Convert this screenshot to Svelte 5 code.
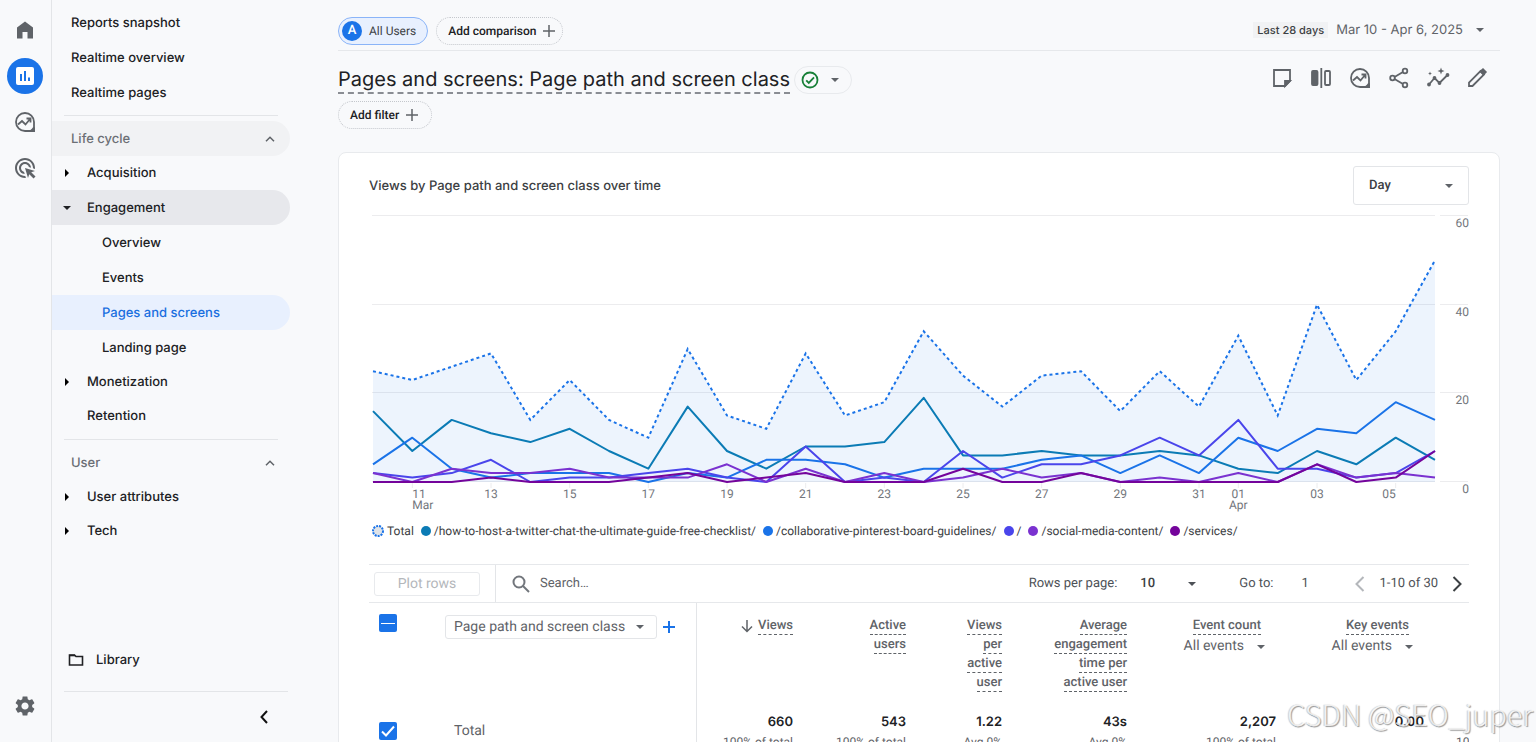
<script>
    const topLinks = ["Reports snapshot", "Realtime overview", "Realtime pages"];

    const lifeCycle = [
        { label: "Acquisition", caret: "right" },
        {
            label: "Engagement",
            caret: "down",
            open: true,
            children: ["Overview", "Events", "Pages and screens", "Landing page"],
        },
        { label: "Monetization", caret: "right" },
        { label: "Retention" },
    ];

    const userItems = [
        { label: "User attributes", caret: "right" },
        { label: "Tech", caret: "right" },
    ];

    let activePage = $state("Pages and screens");

    // Daily views, Mar 10 to Apr 6
    const total = [
        25, 23, 26, 29, 14, 23, 14, 10, 30, 15, 12, 29, 15, 18, 34, 24, 17, 24,
        25, 16, 25, 17, 33, 15, 40, 23, 34, 50,
    ];

    const series = [
        {
            name: "/how-to-host-a-twitter-chat-the-ultimate-guide-free-checklist/",
            color: "#0b7bb5",
            values: [
                16, 7, 14, 11, 9, 12, 7, 3, 17, 7, 3, 8, 8, 9, 19, 6, 6, 7, 6,
                6, 7, 6, 3, 2, 7, 4, 10, 5,
            ],
        },
        {
            name: "/collaborative-pinterest-board-guidelines/",
            color: "#1a73e8",
            values: [
                4, 10, 3, 1, 2, 2, 2, 0, 2, 1, 5, 5, 4, 1, 3, 3, 3, 5, 6, 2, 6,
                2, 10, 7, 12, 11, 18, 14,
            ],
        },
        {
            name: "/",
            color: "#4a45eb",
            values: [
                2, 1, 2, 5, 0, 1, 1, 2, 3, 1, 0, 8, 0, 1, 0, 7, 1, 4, 4, 6, 10,
                6, 14, 3, 3, 1, 2, 7,
            ],
        },
        {
            name: "/social-media-content/",
            color: "#7a32d0",
            values: [
                2, 0, 3, 2, 2, 3, 1, 1, 1, 4, 0, 3, 0, 2, 0, 1, 3, 1, 2, 0, 1,
                0, 2, 0, 4, 1, 2, 1,
            ],
        },
        {
            name: "/services/",
            color: "#74049b",
            values: [
                0, 0, 0, 1, 0, 0, 0, 1, 2, 0, 1, 2, 0, 0, 0, 3, 0, 0, 2, 0, 0,
                0, 0, 0, 4, 0, 1, 7,
            ],
        },
    ];

    const dayTicks = [
        { i: 1, day: "11", month: "Mar", anchor: "start" },
        { i: 3, day: "13" },
        { i: 5, day: "15" },
        { i: 7, day: "17" },
        { i: 9, day: "19" },
        { i: 11, day: "21" },
        { i: 13, day: "23" },
        { i: 15, day: "25" },
        { i: 17, day: "27" },
        { i: 19, day: "29" },
        { i: 21, day: "31" },
        { i: 22, day: "01", month: "Apr" },
        { i: 24, day: "03" },
        { i: 26, day: "05", anchor: "end" },
    ];

    const gridValues = [60, 40, 20, 0];

    // The plot stretches with the card, the axis column on the right stays fixed
    let chartWidth = $state(1100);
    const plotLeft = 4;
    let plotRight = $derived(chartWidth - 34);

    function x(i) {
        return plotLeft + (i * (plotRight - plotLeft)) / (total.length - 1);
    }

    function y(v) {
        return 267 - (v * 266) / 60;
    }

    function linePath(values) {
        return values
            .map((v, i) => `${i ? "L" : "M"}${x(i).toFixed(1)} ${y(v).toFixed(1)}`)
            .join("");
    }

    function areaPath(values) {
        return `${linePath(values)}V${y(0)}H${plotLeft}Z`;
    }

    const metrics = [
        { label: "Views", width: 113, value: "660", note: "100% of total", sorted: true },
        { label: "Active users", width: 113, value: "543", note: "100% of total" },
        { label: "Views per active user", width: 96, value: "1.22", note: "Avg 0%" },
        { label: "Average engagement time per active user", width: 125, value: "43s", note: "Avg 0%" },
        { label: "Event count", width: 149, value: "2,207", note: "100% of total", filter: true },
        { label: "Key events", width: 148, value: "0.00", note: "", filter: true },
    ];

    let granularity = $state("Day");
    let search = $state("");
    let goTo = $state("1");
    let allSelected = $state(false);
    let someSelected = $state(true);
    let totalSelected = $state(true);
</script>

{#snippet caret()}
    <svg class="caret" viewBox="0 0 8 4" width="8" height="4" aria-hidden="true"><path d="M0 0h8L4 4z" /></svg>
{/snippet}

{#snippet plus()}
    <svg class="plus" viewBox="0 0 12 12" width="12" height="12" aria-hidden="true"><path d="M6 0v12M0 6h12" /></svg>
{/snippet}

{#snippet exploreIcon()}
    <svg class="icon line" viewBox="0 0 24 24" width="24" height="24" aria-hidden="true">
        <path d="M12 3a9 9 0 1 0 0 18h9v-9a9 9 0 0 0-9-9z" />
        <path d="M5 14.5l4-3.5 3.5 3.5 4.5-5.5M13.5 8.5H17.5V12.5" />
        <path class="solid" d="M21 17.5V21h-3.5c1.5-.8 2.700-2 3.500-3.500z" />
    </svg>
{/snippet}

{#snippet navItem(item)}
    <li>
        <button class="nav-item" class:open={item.open}>
            <span class="nav-caret">
                {#if item.caret === "right"}
                    <svg viewBox="0 0 4 8" width="4" height="8" aria-hidden="true"><path d="M0 0v8l4-4z" /></svg>
                {:else if item.caret === "down"}
                    {@render caret()}
                {/if}
            </span>
            {item.label}
        </button>
        {#if item.children}
            <ul>
                {#each item.children as child}
                    <li>
                        <a
                            class="nav-child"
                            class:active={child === activePage}
                            href="#{child}"
                            onclick={() => (activePage = child)}>{child}</a
                        >
                    </li>
                {/each}
            </ul>
        {/if}
    </li>
{/snippet}

{#snippet groupHead(label, shaded)}
    <button class="group-head" class:shaded>
        {label}
        <svg viewBox="0 0 10 6" width="10" height="6" aria-hidden="true"><path d="M1 5.200l4-4 4 4" /></svg>
    </button>
{/snippet}

<div class="shell">
    <nav class="rail" aria-label="Sections">
        <button class="rail-button" aria-label="Home">
            <svg class="icon" viewBox="0 0 24 24" width="24" height="24"><path d="M4 20.500V9.500L12 3.500l8 6v11h-5.500v-6.500h-5v6.500z" /></svg>
        </button>
        <button class="rail-button" aria-label="Reports">
            <span class="rail-active">
                <svg viewBox="0 0 18 18" width="18" height="18">
                    <rect width="18" height="18" rx="2" fill="#fff" />
                    <path fill="#1a73e8" d="M4 7h2v7H4zM8 4h2v10H8zM12 10.500h2V14h-2z" />
                </svg>
            </span>
        </button>
        <button class="rail-button" aria-label="Explore">{@render exploreIcon()}</button>
        <button class="rail-button" aria-label="Advertising">
            <svg class="icon" viewBox="0 0 24 24" width="24" height="24"
                ><path
                    d="M11.710 17.990C8.530 17.840 6 15.220 6 12c0-3.310 2.690-6 6-6 3.220 0 5.840 2.530 5.990 5.710l-2.100-.630C15.480 9.310 13.890 8 12 8c-2.210 0-4 1.790-4 4 0 1.890 1.310 3.480 3.080 3.890l.630 2.100zM22 12c0 .300-.010.600-.040.900l-1.970-.590c.010-.100.010-.210.010-.310 0-4.420-3.580-8-8-8s-8 3.580-8 8 3.580 8 8 8c.100 0 .210 0 .310-.010l.590 1.970c-.300.030-.600.040-.900.040-5.520 0-10-4.480-10-10S6.480 2 12 2s10 4.480 10 10zm-3.770 4.260L22 15l-10-3 3 10 1.260-3.770 4.270 4.270 1.980-1.980-4.280-4.260z"
                /></svg
            >
        </button>
        <button class="rail-button settings" aria-label="Admin">
            <svg class="icon" viewBox="0 0 24 24" width="24" height="24"
                ><path
                    d="M19.140 12.940c.040-.300.060-.610.060-.940 0-.320-.020-.640-.070-.940l2.030-1.580c.180-.140.230-.410.120-.610l-1.920-3.320c-.120-.220-.370-.290-.590-.220l-2.390.960c-.500-.380-1.030-.700-1.620-.940l-.360-2.540c-.040-.240-.240-.410-.480-.410h-3.840c-.240 0-.430.170-.470.410l-.360 2.540c-.590.240-1.130.570-1.620.940l-2.390-.960c-.220-.080-.470 0-.590.220L2.740 8.870c-.120.210-.080.470.120.610l2.030 1.580c-.050.300-.090.630-.090.940s.020.640.070.940l-2.030 1.580c-.180.140-.230.410-.120.610l1.920 3.320c.120.220.370.290.590.220l2.390-.960c.500.380 1.030.700 1.620.940l.360 2.540c.050.240.240.410.480.410h3.840c.240 0 .440-.170.470-.410l.360-2.540c.590-.240 1.130-.560 1.620-.940l2.390.960c.220.080.470 0 .590-.220l1.920-3.320c.120-.220.070-.470-.120-.610l-2.010-1.580zM12 15.600c-1.980 0-3.600-1.620-3.600-3.600s1.620-3.600 3.600-3.600 3.600 1.620 3.600 3.600-1.620 3.600-3.600 3.600z"
                /></svg
            >
        </button>
    </nav>

    <nav class="sidebar" aria-label="Reports">
        <ul>
            {#each topLinks as link}
                <li><a class="top-link" href="#{link}">{link}</a></li>
            {/each}
        </ul>
        <hr />
        {@render groupHead("Life cycle", true)}
        <ul class="group">
            {#each lifeCycle as item}
                {@render navItem(item)}
            {/each}
        </ul>
        <hr />
        {@render groupHead("User", false)}
        <ul class="group">
            {#each userItems as item}
                {@render navItem(item)}
            {/each}
        </ul>
        <div class="sidebar-bottom">
            <a class="library" href="#library">
                <svg viewBox="0 0 16 14" width="16" height="14" aria-hidden="true">
                    <path d="M1.500 2v10h13V3.500H8L6.500 2z" />
                    <path d="M1.500 2.500h5.500" />
                </svg>
                Library
            </a>
            <div class="collapse-row">
                <button class="collapse" aria-label="Collapse navigation">
                    <svg viewBox="0 0 8 14" width="8" height="14"><path d="M7 1L1.500 7 7 13" /></svg>
                </button>
            </div>
        </div>
    </nav>

    <main>
        <header class="top-bar">
            <button class="chip all-users"><span class="avatar">A</span>All Users</button>
            <button class="chip dotted">Add comparison {@render plus()}</button>
            <button class="date-range">
                <span class="preset">Last 28 days</span>
                Mar 10 - Apr 6, 2025
                {@render caret()}
            </button>
        </header>

        <div class="title-bar">
            <h1>Pages and screens: Page path and screen class</h1>
            <button class="status" aria-label="Report status">
                <svg class="check" viewBox="0 0 18 18" width="18" height="18">
                    <circle cx="9" cy="9" r="7.500" />
                    <path d="M5.200 9.300l2.600 2.600 5.200-5.600" />
                </svg>
                {@render caret()}
            </button>
            <div class="actions">
                <button aria-label="Notes">
                    <svg class="icon line" viewBox="0 0 24 24" width="24" height="24">
                        <path d="M4 4h16v11l-5 5H4z" />
                        <path class="solid" d="M15 15h5l-5 5z" />
                    </svg>
                </button>
                <button aria-label="Comparisons">
                    <svg class="icon line" viewBox="0 0 24 24" width="24" height="24">
                        <rect class="solid" x="3" y="5" width="5.500" height="14" rx="1" />
                        <path d="M12.300 2v20" />
                        <rect x="16" y="5" width="5" height="14" rx="1" />
                    </svg>
                </button>
                <button aria-label="Explore">{@render exploreIcon()}</button>
                <button aria-label="Share">
                    <svg class="icon line" viewBox="0 0 24 24" width="24" height="24">
                        <path d="M7.500 11l8.500-5M7.500 13l8.500 5" />
                        <circle cx="5.500" cy="12" r="2.300" />
                        <circle cx="18" cy="5" r="2.300" />
                        <circle cx="18" cy="19" r="2.300" />
                    </svg>
                </button>
                <button aria-label="Insights">
                    <svg class="icon line" viewBox="0 0 24 24" width="24" height="24">
                        <path d="M3 18.500l5.500-6.500 5 5L21.500 9" />
                        <circle class="solid" cx="3" cy="18.500" r="1" />
                        <circle class="solid" cx="8.500" cy="12" r="1" />
                        <circle class="solid" cx="13.500" cy="17" r="1" />
                        <circle class="solid" cx="21.500" cy="9" r="1" />
                        <path class="spark" d="M15 1.500l.900 2.600 2.600.900-2.600.900L15 8.500l-.900-2.600-2.600-.900 2.600-.900zM4 5.500l.600 1.400 1.400.600-1.400.600L4 9.500l-.600-1.400L2 7.500l1.400-.600z" />
                    </svg>
                </button>
                <button aria-label="Edit">
                    <svg class="icon line" viewBox="0 0 24 24" width="24" height="24">
                        <path d="M4 20v-3.500L15.500 5l3.500 3.500L7.500 20z" />
                        <path class="solid" d="M15.500 5.500l2.500-2.300 2.800 2.800-2.300 2.500z" />
                    </svg>
                </button>
            </div>
        </div>

        <button class="chip dotted add-filter">Add filter {@render plus()}</button>

        <section class="card">
            <div class="card-head">
                <h2>Views by Page path and screen class over time</h2>
                <label class="granularity">
                    <select bind:value={granularity} aria-label="Granularity">
                        <option>Day</option>
                        <option>Week</option>
                        <option>Month</option>
                    </select>
                    {@render caret()}
                </label>
            </div>

            <div class="chart" bind:clientWidth={chartWidth}>
                <svg width={chartWidth} height="304" role="img" aria-label="Views by page path over time">
                    {#each gridValues as v}
                        <path class="grid" d="M{plotLeft - 1} {Math.round(y(v)) - 0.5}H{plotRight}M{plotRight + 5} {Math.round(y(v)) - 0.5}H{chartWidth - 1}" />
                        <text x={chartWidth} y={y(v) + 11} text-anchor="end">{v}</text>
                    {/each}
                    <path class="area" d={areaPath(total)} />
                    <path class="total" d={linePath(total)} />
                    {#each series as s}
                        <path class="series" stroke={s.color} d={linePath(s.values)} />
                    {/each}
                    {#each dayTicks as t}
                        <path class="grid" d="M{x(t.i)} 268v5" />
                        <text x={x(t.i)} y="283" text-anchor={t.anchor ?? "middle"}>{t.day}</text>
                        {#if t.month}
                            <text x={x(t.i)} y="294" text-anchor={t.anchor ?? "middle"}>{t.month}</text>
                        {/if}
                    {/each}
                </svg>
            </div>

            <ul class="legend">
                <li>
                    <svg viewBox="0 0 12 12" width="12" height="12" aria-hidden="true"><circle class="total-dot" cx="6" cy="6" r="5" /></svg>
                    Total
                </li>
                {#each series as s}
                    <li>
                        <svg viewBox="0 0 10 10" width="10" height="10" aria-hidden="true"><circle cx="5" cy="5" r="5" fill={s.color} /></svg>
                        {s.name}
                    </li>
                {/each}
            </ul>

            <div class="toolbar">
                <div class="plot-cell"><button class="plot-rows" disabled>Plot rows</button></div>
                <label class="search">
                    <svg viewBox="0 0 18 18" width="18" height="18" aria-hidden="true">
                        <circle cx="7" cy="7" r="5.500" />
                        <path d="M11 11l6 6" />
                    </svg>
                    <input type="text" placeholder="Search…" aria-label="Search" bind:value={search} />
                </label>
                <label class="rows">
                    Rows per page:
                    <span class="rows-select">
                        <select>
                            <option>10</option>
                            <option>25</option>
                            <option>50</option>
                        </select>
                        {@render caret()}
                    </span>
                </label>
                <label class="goto">Go to: <input type="text" bind:value={goTo} /></label>
                <div class="pager">
                    <button disabled aria-label="Previous page">
                        <svg viewBox="0 0 10 16" width="10" height="16"><path d="M8.500 1L1.500 8l7 7" /></svg>
                    </button>
                    1-10 of 30
                    <button aria-label="Next page">
                        <svg viewBox="0 0 10 16" width="10" height="16"><path d="M1.500 1l7 7-7 7" /></svg>
                    </button>
                </div>
            </div>

            <table>
                <colgroup>
                    <col style="width: 70px" />
                    <col />
                    {#each metrics as m}
                        <col style="width: {m.width}px" />
                    {/each}
                    <col style="width: 29px" />
                </colgroup>
                <thead>
                    <tr>
                        <th class="tick"><input type="checkbox" aria-label="Select all rows" bind:checked={allSelected} bind:indeterminate={someSelected} /></th>
                        <th class="dimension">
                            <div class="dimension-picker">
                                <button class="dimension-button">Page path and screen class {@render caret()}</button>
                                <button class="add-dimension" aria-label="Add dimension">{@render plus()}</button>
                            </div>
                        </th>
                        {#each metrics as m}
                            <th class="metric" class:filtered={m.filter}>
                                {#if m.sorted}
                                    <svg class="sort" viewBox="0 0 12 14" width="12" height="14" aria-hidden="true"><path d="M6 1v11M1 7.500l5 5 5-5" /></svg>
                                {/if}
                                <span class="metric-name">{m.label}</span>
                                {#if m.filter}
                                    <button class="event-filter">All events {@render caret()}</button>
                                {/if}
                            </th>
                        {/each}
                        <th></th>
                    </tr>
                </thead>
                <tbody>
                    <tr>
                        <td class="tick"><input type="checkbox" aria-label="Plot total" bind:checked={totalSelected} /></td>
                        <td class="dimension total-label">Total</td>
                        {#each metrics as m}
                            <td class="number">
                                <strong>{m.value}</strong>
                                <small>{m.note}</small>
                            </td>
                        {/each}
                        <td class="number cut"><strong>&nbsp;</strong><small>100% of total</small></td>
                    </tr>
                </tbody>
            </table>
        </section>
    </main>

    <div class="watermark">CSDN @SEO_juper</div>
</div>

<style>
    :global(body) {
        background: #f8f9fb;
    }

    .shell {
        position: relative;
        display: flex;
        height: 100vh;
        overflow: hidden;
        font-family: Roboto, "Liberation Sans", sans-serif;
        font-size: 13px;
        color: #202124;
        text-rendering: geometricPrecision;
    }

    .shell :global(*) {
        box-sizing: border-box;
    }

    button,
    input,
    select {
        font: inherit;
        color: inherit;
        background: none;
        border: 0;
        margin: 0;
        padding: 0;
        text-rendering: inherit;
    }

    button {
        cursor: pointer;
    }

    a {
        color: inherit;
        text-decoration: none;
    }

    ul {
        list-style: none;
        margin: 0;
        padding: 0;
    }

    svg {
        display: block;
        flex: none;
    }

    .caret {
        fill: currentColor;
    }

    .plus {
        fill: none;
        stroke: currentColor;
        stroke-width: 1.5;
    }

    .icon {
        fill: #5f6368;
    }

    .icon.line {
        fill: none;
        stroke: #5f6368;
        stroke-width: 1.8;
    }

    .icon .solid {
        fill: #5f6368;
    }

    .icon .spark {
        fill: #5f6368;
        stroke: none;
    }

    /* Icon rail */
    .rail {
        display: flex;
        flex-direction: column;
        width: 52px;
        padding: 7px 2px 13px 0;
        border-right: 1px solid #e3e5e8;
        flex: none;
    }

    .rail-button {
        display: grid;
        place-items: center;
        height: 46px;
    }

    .rail-active {
        display: grid;
        place-items: center;
        width: 36px;
        height: 36px;
        border-radius: 50%;
        background: #1a73e8;
    }

    .settings {
        margin-top: auto;
    }

    /* Report navigation */
    .sidebar {
        display: flex;
        flex-direction: column;
        width: 238px;
        padding-top: 5px;
        flex: none;
        font-family: Inter, sans-serif;
        font-weight: 500;
    }

    .sidebar hr {
        height: 1px;
        margin: 5px 12px;
        border: 0;
        background: #e3e5e8;
    }

    .top-link,
    .nav-child,
    .nav-item,
    .group-head,
    .library {
        display: flex;
        align-items: center;
        width: 100%;
        height: 35px;
        border-radius: 0 18px 18px 0;
    }

    .top-link {
        padding-left: 19px;
    }

    .group-head {
        justify-content: space-between;
        padding: 0 15px 0 19px;
        color: #6b6f75;
    }

    .group-head svg {
        fill: none;
        stroke: #5f6368;
        stroke-width: 1.5;
    }

    .group-head.shaded {
        background: #f1f2f4;
    }

    .group {
        padding-bottom: 1px;
    }

    .nav-item {
        height: 34px;
    }

    .nav-item.open {
        height: 35px;
        background: #e7e8ec;
    }

    .nav-caret {
        display: grid;
        place-items: center;
        width: 30px;
        margin-right: 5px;
    }

    .nav-child {
        padding-left: 50px;
    }

    .nav-child.active {
        background: #e8f0fe;
        color: #1a6fe0;
    }

    .sidebar-bottom {
        margin-top: auto;
    }

    .library {
        gap: 12px;
        padding-left: 16px;
        margin-bottom: 14px;
    }

    .library svg {
        fill: none;
        stroke: #202124;
        stroke-width: 1.6;
    }

    .collapse-row {
        display: flex;
        justify-content: flex-end;
        height: 51px;
        margin: 0 2px 0 12px;
        padding-right: 14px;
        border-top: 1px solid #e3e5e8;
    }

    .collapse {
        display: grid;
        place-items: center;
        width: 20px;
    }

    .collapse svg {
        fill: none;
        stroke: #111;
        stroke-width: 2;
    }

    /* Header */
    main {
        flex: 1;
        min-width: 0;
        padding: 0 36px 0 48px;
    }

    .top-bar {
        display: flex;
        align-items: center;
        gap: 8px;
        height: 51px;
        padding-top: 11px;
        border-bottom: 1px solid #e6e8eb;
    }

    .chip {
        display: flex;
        align-items: center;
        gap: 7px;
        height: 28px;
        border: 1px solid #8ab4f8;
        border-radius: 14px;
        font-size: 12px;
    }

    .chip.dotted {
        padding: 0 7px 0 11px;
        border: 1px dotted #c4c7cc;
        font-weight: 500;
    }

    .chip.dotted .plus {
        stroke: #5f6368;
    }

    .chip.add-filter {
        padding-right: 13px;
    }

    .chip.all-users {
        background: #e8f0fe;
        padding: 0 11px 0 3px;
        color: #3c4043;
    }

    .avatar {
        display: grid;
        place-items: center;
        width: 20px;
        height: 20px;
        border-radius: 50%;
        background: #1a73e8;
        color: #fff;
        font-size: 13px;
        font-weight: 500;
    }

    .date-range {
        display: flex;
        align-items: center;
        gap: 8px;
        margin-left: auto;
        padding: 0 16px 2px 0;
        font-family: Inter, sans-serif;
        color: #5f6368;
    }

    .date-range .caret {
        margin-left: 5px;
    }

    .preset {
        padding: 0 4px;
        background: #f1f2f4;
        color: #3c4043;
        font-size: 11px;
        font-weight: 500;
        line-height: 16px;
    }

    .title-bar {
        display: flex;
        align-items: center;
        height: 50px;
        padding-top: 7px;
        gap: 4px;
    }

    h1 {
        margin: 0;
        border-bottom: 2px dashed #8a8d93;
        font-family: Inter, sans-serif;
        font-size: 20px;
        font-weight: 400;
        line-height: 26px;
        white-space: nowrap;
    }

    .status {
        display: flex;
        align-items: center;
        gap: 12px;
        height: 28px;
        padding: 0 12px 0 6px;
        border: 1px solid #e8eaed;
        border-radius: 14px;
        color: #5f6368;
    }

    .check {
        fill: none;
        stroke: #188038;
        stroke-width: 1.8;
    }

    .actions {
        display: flex;
        gap: 15px;
        margin-left: auto;
        padding: 0 11px 4px 0;
    }

    /* Card */
    .card {
        margin-top: 23px;
        padding: 0 30px;
        border: 1px solid #e8eaed;
        border-radius: 8px 8px 0 0;
        background: #fff;
    }

    .card-head {
        display: flex;
        align-items: center;
        justify-content: space-between;
        height: 62px;
        padding-top: 3px;
    }

    h2 {
        margin: 0;
        font-family: Inter, sans-serif;
        font-size: 13px;
        font-weight: 500;
        color: #3c4043;
    }

    .granularity {
        display: flex;
        align-items: center;
        width: 116px;
        height: 39px;
        padding: 0 15px;
        border: 1px solid #e3e5e8;
        border-radius: 3px;
        color: #5f6368;
    }

    select {
        appearance: none;
        flex: 1;
        min-width: 0;
        outline: none;
        font-weight: 500;
        color: #3c4043;
    }

    .chart text {
        font-size: 12px;
        fill: #72767c;
    }

    .grid {
        fill: none;
        stroke: #ececee;
    }

    .area {
        fill: #1a73e8;
        fill-opacity: 0.08;
    }

    .total {
        fill: none;
        stroke: #1a73e8;
        stroke-width: 2;
        stroke-dasharray: 3 3;
    }

    .series {
        fill: none;
        stroke-width: 2;
        stroke-linejoin: round;
    }

    .legend {
        display: flex;
        gap: 7px;
        padding: 3px 3px 24px;
        font-size: 12px;
        line-height: 18px;
        color: #3c4043;
        white-space: nowrap;
    }

    .legend li {
        display: flex;
        align-items: center;
        gap: 3px;
    }

    .total-dot {
        fill: #dfe3e8;
        stroke: #1a73e8;
        stroke-width: 2;
        stroke-dasharray: 2 1;
    }

    /* Table toolbar */
    .toolbar {
        display: flex;
        align-items: center;
        height: 39px;
        border: 1px solid #e6e8eb;
        border-width: 1px 0;
        color: #4d5156;
    }

    .plot-cell {
        display: flex;
        align-items: center;
        width: 127px;
        height: 100%;
        padding-left: 5px;
        border-right: 1px solid #e3e5e8;
    }

    .plot-rows {
        width: 106px;
        height: 24px;
        border: 1px solid #e8eaed;
        border-radius: 3px;
        color: #b4b7bb;
        font-size: 14px;
    }

    .search {
        display: flex;
        align-items: center;
        flex: 1;
        gap: 10px;
        padding-left: 16px;
    }

    .search svg {
        fill: none;
        stroke: #72767c;
        stroke-width: 2;
    }

    .search input {
        flex: 1;
        min-width: 0;
        outline: none;
    }

    .search input::placeholder {
        color: #5f6368;
        opacity: 1;
    }

    .rows,
    .rows-select,
    .goto,
    .pager {
        display: flex;
        align-items: center;
    }

    .rows {
        gap: 23px;
    }

    .rows-select {
        width: 56px;
    }

    .goto {
        gap: 28px;
        margin-left: 43px;
    }

    .goto input {
        width: 20px;
        outline: none;
    }

    .pager {
        gap: 14px;
        margin: 0 7px 0 34px;
    }

    .pager svg {
        fill: none;
        stroke: #3c4043;
        stroke-width: 2;
    }

    .pager button:disabled svg {
        stroke: #b4b7bb;
    }

    /* Data table */
    table {
        width: 100%;
        table-layout: fixed;
        border-collapse: collapse;
    }

    th,
    td {
        padding: 0 16px 0 0;
        text-align: right;
        vertical-align: top;
        color: #5f6368;
    }

    th {
        height: 109px;
        padding-top: 12px;
        font-size: 13px;
        font-weight: 500;
        line-height: 19px;
    }

    th.metric {
        padding-top: 13px;
        padding-left: 30px;
    }

    .tick {
        padding-left: 10px;
        text-align: left;
    }

    input[type="checkbox"] {
        appearance: none;
        display: block;
        width: 18px;
        height: 18px;
        border-radius: 2px;
        background: #1a73e8 center / 18px no-repeat;
    }

    input[type="checkbox"]:indeterminate {
        background-image: linear-gradient(#fff, #fff);
        background-size: 14px 1px;
    }

    input[type="checkbox"]:checked {
        background-image: url('data:image/svg+xml,<svg xmlns="http://www.w3.org/2000/svg" viewBox="0 0 18 18"><path d="M3 9.500l4 4 8-9" fill="none" stroke="white" stroke-width="2"/></svg>');
    }

    .dimension {
        padding-left: 6px;
        border-right: 1px solid #e3e5e8;
        text-align: left;
        font-size: 14px;
        font-weight: 400;
    }

    .dimension-picker {
        display: flex;
        align-items: center;
        gap: 6px;
        white-space: nowrap;
    }

    .dimension-button {
        display: flex;
        align-items: center;
        justify-content: space-between;
        width: 212px;
        height: 24px;
        padding: 0 12px 0 8px;
        border: 1px solid #e3e5e8;
        border-radius: 3px;
    }

    .add-dimension {
        color: #1a73e8;
    }

    .add-dimension .plus {
        stroke-width: 2;
    }

    .metric-name {
        border-bottom: 1px dashed #5f6368;
        padding-bottom: 1px;
    }

    .sort {
        display: inline-block;
        margin-right: 2px;
        vertical-align: middle;
        fill: none;
        stroke: #5f6368;
        stroke-width: 1.5;
    }

    th.filtered {
        padding-right: 27px;
    }

    .filtered .metric-name {
        margin-right: 4px;
    }

    .event-filter {
        display: flex;
        align-items: center;
        justify-content: flex-end;
        gap: 13px;
        width: 100%;
        margin-top: 2px;
        font-weight: 400;
        font-size: 14px;
        white-space: nowrap;
    }

    td.total-label {
        padding: 11px 0 0 15px;
    }

    th.tick {
        padding-top: 11px;
    }

    td.tick {
        padding-top: 10px;
    }

    .number strong,
    .number small {
        display: block;
        white-space: nowrap;
        line-height: 20px;
    }

    .number strong {
        font-family: Inter, sans-serif;
        font-size: 13px;
        font-weight: 600;
        color: #202124;
    }

    .number small {
        font-size: 12px;
    }

    td.cut {
        padding: 0 0 0 16px;
        overflow: hidden;
        text-align: left;
    }

    .watermark {
        position: absolute;
        right: 3px;
        bottom: 6px;
        font-family: "Noto Sans CJK SC", "Noto Sans", sans-serif;
        font-size: 29px;
        font-weight: 300;
        line-height: 44px;
        color: rgba(255, 255, 255, 0.8);
        text-shadow: 1px 1px 1px rgba(0, 0, 0, 0.4), -1px 0 1px rgba(0, 0, 0, 0.2);
        pointer-events: none;
    }
</style>
